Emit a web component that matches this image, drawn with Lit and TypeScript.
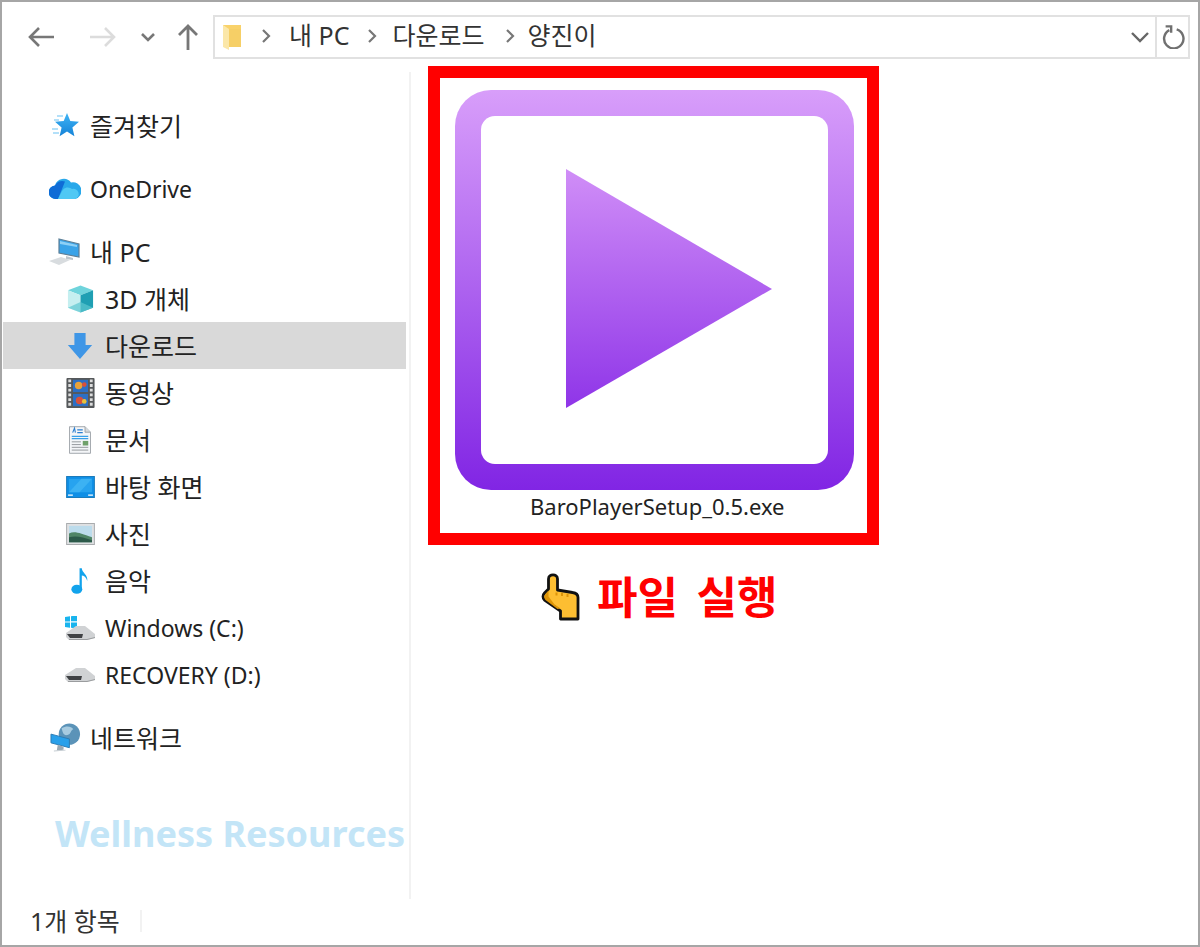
import { LitElement, html, css, svg } from "lit";
import { customElement } from "lit/decorators.js";

const icons: Record<string, any> = {
  star: svg`<svg width="30" height="28" viewBox="0 0 30 28"><defs><linearGradient id="s" x1="0" y1="0" x2="0" y2="1"><stop offset="0" stop-color="#3fb4f5"/><stop offset="1" stop-color="#1583d8"/></linearGradient></defs><path d="M17 1l3.300 7.900 8.700.8-6.600 5.800 2 8.800L17 19.600l-7.400 4.700 2-8.800L5 9.700l8.700-.8z" fill="url(#s)"/><path d="M7 4h6M4 8h5M2 17h6M3 21h6" stroke="#9bd6f7" stroke-width="1.400"/></svg>`,
  cloud: svg`<svg width="32" height="24" viewBox="0 0 32 24"><path d="M7 22a6.500 6.500 0 0 1-1-13.500 9 9 0 0 1 16-3 7 7 0 0 1 4 16.500z" fill="#28a8ea"/><path d="M7 22a6.500 6.500 0 0 1-1-13.500 9 9 0 0 1 10-4L9 22z" fill="#0f6cd6"/><path d="M9 22l4-8a6.500 6.500 0 0 1 10-2 5 5 0 0 1 3 10z" fill="#4fc8f4"/></svg>`,
  pc: svg`<svg width="32" height="28" viewBox="0 0 32 28"><path d="M10 1l20 5v13L10 15z" fill="#3aa3e8" stroke="#5d7f97" stroke-width="1.200"/><path d="M11 3l17 4v2L11 6z" fill="#8ed0f6"/><path d="M17 18l7 2v2l-7-1z" fill="#bcc5cc"/><path d="M0 23l12-4 9 3-11 5z" fill="#d8dcdf"/></svg>`,
  cube: svg`<svg width="29" height="30" viewBox="0 0 30 30"><path d="M15 1l13 5-13 5L2 6z" fill="#6fd4dc"/><path d="M2 6l13 5v18L2 24z" fill="#c5eff0"/><path d="M28 6L15 11v18l13-5z" fill="#1f9fb3"/><path d="M2 24l13-6 13 6-13 5z" fill="#5cc7d0" opacity=".7"/></svg>`,
  down: svg`<svg width="28" height="28" viewBox="0 0 28 30"><path d="M8 1h12v13h7L14 29 1 14h7z" fill="#3f96e6"/></svg>`,
  film: svg`<svg width="29" height="30" viewBox="0 0 30 32"><rect width="30" height="32" fill="#55585a" rx="1"/><rect x="7" y="2" width="16" height="13" fill="#2c6fc4"/><rect x="7" y="17" width="16" height="13" fill="#2c6fc4"/><circle cx="13" cy="8" r="4" fill="#e8a23a"/><circle cx="19" cy="7" r="2.500" fill="#d8503a"/><circle cx="14" cy="24" r="4" fill="#d8503a"/><circle cx="19" cy="25" r="2.500" fill="#e8c23a"/><path d="M2 3h3M2 8h3M2 13h3M2 18h3M2 23h3M2 28h3M25 3h3M25 8h3M25 13h3M25 18h3M25 23h3M25 28h3" stroke="#ddd" stroke-width="3"/></svg>`,
  doc: svg`<svg width="22" height="28" viewBox="0 0 24 30"><path d="M.5.500h17l6 6v23H.5z" fill="#f4f6f8" stroke="#9aa0a5"/><path d="M17.500.500v6h6" fill="#d6dadd" stroke="#9aa0a5"/><path d="M4 7l2-5 1 5M9 4h6M9 7h6" stroke="#2b7fd0" stroke-width="1.200" fill="none"/><path d="M3 11h18M3 13.500h18" stroke="#39a0e8" stroke-width="1.200"/><path d="M3 17h10M3 20h10M3 23h18M3 26h18" stroke="#8d9296" stroke-width="1"/><rect x="15" y="16" width="6" height="5" fill="#6fa06a"/></svg>`,
  desk: svg`<svg width="29" height="22" viewBox="0 0 30 23"><rect x=".5" y=".500" width="29" height="22" fill="#0f8fe6" stroke="#1878b8"/><path d="M3 3h24v14H3z" fill="#27a3ef"/><path d="M16 3h11L14 17H3z" fill="#3cb2f3"/><path d="M2 20h5M23 20h5" stroke="#fff" stroke-width="1.500"/></svg>`,
  photo: svg`<svg width="29" height="22" viewBox="0 0 30 23"><rect x=".5" y=".500" width="29" height="22" fill="#dfe1e3" stroke="#a6a9ab"/><rect x="3" y="3" width="24" height="17" fill="#bcdcec"/><path d="M3 11c6-3 12 0 24 4v5H3z" fill="#4f8566"/><path d="M3 15c8-2 14 0 24 3v2H3z" fill="#2c5a4a"/></svg>`,
  note: svg`<svg width="20" height="28" viewBox="0 0 22 30"><ellipse cx="7.500" cy="24" rx="6" ry="5" fill="#12a3ec"/><path d="M10.500 24V1h2.500c0 5 7 7 6 14-1-4-4-6-6-6v15z" fill="#12a3ec"/></svg>`,
  win: svg`<svg width="32" height="24" viewBox="0 0 32 24"><path d="M1 1l5-.700v5.200H1zM7 .200l6-.800v5.900H7zM1 6.500h5v5.200l-5-.7zM7 6.500h6v6l-6-.8z" fill="#19b4ee"/><path d="M2 17l10-7h9l10 8v4l-8 2H5l-3-3z" fill="#d0d2d4"/><path d="M3 18h16l-1 4H6z" fill="#3f4144"/><path d="M5 24h18l8-2v-1l-8 2H5z" fill="#9a9c9e"/></svg>`,
  drive: svg`<svg width="30" height="15" viewBox="0 0 30 15"><path d="M0 8L11 1h9l10 8v4l-8 2H3l-3-3z" fill="#d0d2d4"/><path d="M1 9h16l-1 4H4z" fill="#3f4144"/><path d="M3 15h19l8-2v-1l-8 2H3z" fill="#9a9c9e"/></svg>`,
  net: svg`<svg width="31" height="30" viewBox="0 0 32 30"><circle cx="20" cy="11" r="11" fill="#5b93b8"/><path d="M12 5c5-3 10-2 12 1-3 1-2 5-6 6s-5-3-6-7z" fill="#a7cbe0"/><path d="M1 11l19 5v9L1 20z" fill="#29a0ea" stroke="#2b7cb5"/><path d="M8 22l6 2v3l-7 1z" fill="#9aa9b3"/><path d="M4 28l12-1v1l-12 1z" fill="#c2cad0"/></svg>`,
  hand: svg`<svg width="40" height="48" viewBox="0 0 40 48"><path d="M7.500 6c0-5.500 9-5.500 9 0v11l15 2.500c3.500.5 5.500 2 5.500 5v21.500H19.500v-8L3.500 27c-2-2-2-5 0-7l4-4z" fill="#fdbe32" stroke="#111" stroke-width="2.800" stroke-linejoin="round"/><path d="M7.500 17.500v6l6 8 6 4-3 .5L4.500 27c-1.500-1.500-1.500-4 0-6z" fill="#dd9407"/><path d="M15.500 19.500v3M21 20v3M26.500 21v3" stroke="#dd9407" stroke-width="2"/></svg>`,
};

interface Row { icon: string; label: string; sub?: boolean; sel?: boolean; gap?: boolean; lat?: boolean }
const rows: Row[] = [
  { icon: "star", label: "즐겨찾기" },
  { icon: "cloud", label: "OneDrive", gap: true, lat: true },
  { icon: "pc", label: "내 PC", gap: true },
  { icon: "cube", label: "3D 개체", sub: true },
  { icon: "down", label: "다운로드", sub: true, sel: true },
  { icon: "film", label: "동영상", sub: true },
  { icon: "doc", label: "문서", sub: true },
  { icon: "desk", label: "바탕 화면", sub: true },
  { icon: "photo", label: "사진", sub: true },
  { icon: "note", label: "음악", sub: true },
  { icon: "win", label: "Windows (C:)", sub: true, lat: true },
  { icon: "drive", label: "RECOVERY (D:)", sub: true, lat: true },
  { icon: "net", label: "네트워크", gap: true },
];

@customElement("app-root")
export class AppRoot extends LitElement {
  static styles = css`
    :host {
      display: flex;
      flex-direction: column;
      box-sizing: border-box;
      width: 1200px;
      height: 947px;
      border: 2px solid #a6a6a6;
      background: #fff;
      font-family: "Noto Sans", "Noto Sans CJK KR", sans-serif;
      color: #222;
      overflow: hidden;
    }
    .toolbar {
      display: flex;
      align-items: center;
      box-sizing: border-box;
      height: 60px;
      padding: 9px 0 0 25px;
      flex: none;
    }
    .nav { display: block; flex: none; }
    .addr {
      display: flex;
      align-items: center;
      width: 977px;
      height: 44px;
      box-sizing: border-box;
      border: 2px solid #e1e1e1;
      flex: none;
      font-size: 25px;
      color: #333;
    }
    .crumbs { display: flex; align-items: center; flex: 1; padding-left: 7px; gap: 18px; }
    .word { white-space: nowrap; padding-bottom: 5px; }
    .sep { margin-bottom: 2px; }
    .sep.first { margin-left: 1px; }
    .word.w2 { margin-left: -3px; }
    .sep.s3 { margin-left: 3px; }
    .word.w3 { margin-left: -6px; }
    .chev { width: 42px; height: 100%; border-right: 2px solid #e1e1e1; display: flex; align-items: center; justify-content: center; box-sizing: border-box; padding-left: 10px; }
    .refresh { width: 31px; display: flex; align-items: center; justify-content: center; }
    .body { display: flex; flex: 1; min-height: 0; }
    .side {
      width: 409px;
      flex: none;
      box-sizing: border-box;
      border-right: 2px solid #f2f2f2;
      padding: 30px 0 0 1px;
      margin-top: 10px;
      height: 827px;
      display: flex;
      flex-direction: column;
    }
    .row {
      display: flex;
      align-items: center;
      height: 47px;
      flex: none;
      font-size: 25px;
      width: 403px;
      color: #222;
      white-space: nowrap;
    }
    .label { padding-bottom: 2px; }
    .row.lat { font-size: 23px; }
    .row.lat .label { padding-bottom: 0; }
    .row.gap { margin-top: 16px; }
    .row.sel { background: #d9d9d9; }
    .ic { width: 40px; height: 47px; display: flex; align-items: center; justify-content: center; margin-left: 42px; margin-right: 5px; flex: none; }
    .row.sub .ic { margin-left: 57px; }
    .water {
      margin: 49px 0 0 52px;
      font-size: 36px;
      font-weight: 700;
      line-height: 48px;
      color: #c3e5f7;
      white-space: nowrap;
    }
    .main { flex: 1; padding: 4px 0 0 17px; display: flex; flex-direction: column; align-items: flex-start; }
    .box {
      box-sizing: border-box;
      width: 451px;
      height: 479px;
      border: 12px solid #ff0000;
      display: flex;
      flex-direction: column;
      align-items: flex-start;
      padding: 12px 0 0 15px;
    }
    .tile {
      box-sizing: border-box;
      width: 399px;
      height: 400px;
      flex: none;
      border-radius: 36px;
      background: linear-gradient(#d89efa, #8125e4);
      padding: 26px;
    }
    .inner {
      width: 100%;
      height: 100%;
      background: #fff;
      border-radius: 14px;
      display: flex;
    }
    .inner svg { display: block; }
    .name { font-size: 22px; line-height: 32px; color: #222; margin: 0 0 0 75px; white-space: nowrap; }
    .cta {
      display: flex;
      align-items: center;
      gap: 16px;
      margin: 26px 0 0 113px;
      color: #ff0000;
      font-weight: 700;
      font-size: 44px;
      line-height: 52px;
      word-spacing: 7px;
      white-space: nowrap;
    }
    .status {
      height: 48px;
      flex: none;
      display: flex;
      align-items: center;
      font-size: 25px;
      padding-left: 28px;
      color: #333;
    }
    .status span { padding-right: 20px; border-right: 2px solid #f2f2f2; line-height: 22px; }
  `;

  render() {
    const chevron = svg`<path d="M2 3l6 6-6 6" fill="none" stroke="#777" stroke-width="2.200"/>`;
    return html`
      <div class="toolbar">
        <svg class="nav" width="186" height="36" viewBox="0 0 186 36">
          <path d="M3 18h24M12 9l-9 9 9 9" fill="none" stroke="#777" stroke-width="2.600"/>
          <path d="M63 18h24M78 9l9 9-9 9" fill="none" stroke="#dcdcdc" stroke-width="2.600"/>
          <path d="M115 15l6 6 6-6" fill="none" stroke="#777" stroke-width="2.600"/>
          <path d="M161 31V7M152 16l9-9 9 9" fill="none" stroke="#777" stroke-width="2.800"/>
        </svg>
        <div class="addr">
          <div class="crumbs">
            <svg width="20" height="26" viewBox="0 0 20 26"><path d="M1 1h18v22H1z" fill="#f9d26a"/><path d="M1 1l6 4v21l-6-3z" fill="#fbe7a8"/><path d="M7 5h12v18H7z" fill="#f6cf66"/></svg>
            <svg class="sep first" width="10" height="18" viewBox="0 0 10 18">${chevron}</svg><span class="word">내 PC</span>
            <svg class="sep" width="10" height="18" viewBox="0 0 10 18">${chevron}</svg><span class="word w2">다운로드</span>
            <svg class="sep s3" width="10" height="18" viewBox="0 0 10 18">${chevron}</svg><span class="word w3">양진이</span>
          </div>
          <div class="chev"><svg width="20" height="12" viewBox="0 0 20 12"><path d="M2 2l8 8 8-8" fill="none" stroke="#666" stroke-width="2.400"/></svg></div>
          <div class="refresh"><svg width="24" height="24" viewBox="0 0 26 26"><path d="M9 5.500A10.500 10.500 0 1 0 17 4.800" fill="none" stroke="#707070" stroke-width="2.600"/><path d="M5 1.500h6v7" fill="none" stroke="#707070" stroke-width="2.600"/></svg></div>
        </div>
      </div>
      <div class="body">
        <nav class="side">
          ${rows.map((r) => html`<div class="row ${r.sub ? "sub" : ""} ${r.sel ? "sel" : ""} ${r.gap ? "gap" : ""} ${r.lat ? "lat" : ""}"><span class="ic">${icons[r.icon]}</span><span class="label">${r.label}</span></div>`)}
          <div class="water">Wellness Resources</div>
        </nav>
        <main class="main">
          <div class="box">
            <div class="tile"><div class="inner">
              <svg width="347" height="348" viewBox="0 0 347 348"><defs><linearGradient id="t" x1="0" y1="0" x2="0" y2="1"><stop offset="0" stop-color="#d08ef7"/><stop offset="1" stop-color="#8f35e8"/></linearGradient></defs><path d="M85 53l206 120-206 119z" fill="url(#t)"/></svg>
            </div></div>
            <div class="name">BaroPlayerSetup_0.5.exe</div>
          </div>
          <div class="cta">${icons.hand}<span>파일 실행</span></div>
        </main>
      </div>
      <div class="status"><span>1개 항목</span></div>
    `;
  }
}
